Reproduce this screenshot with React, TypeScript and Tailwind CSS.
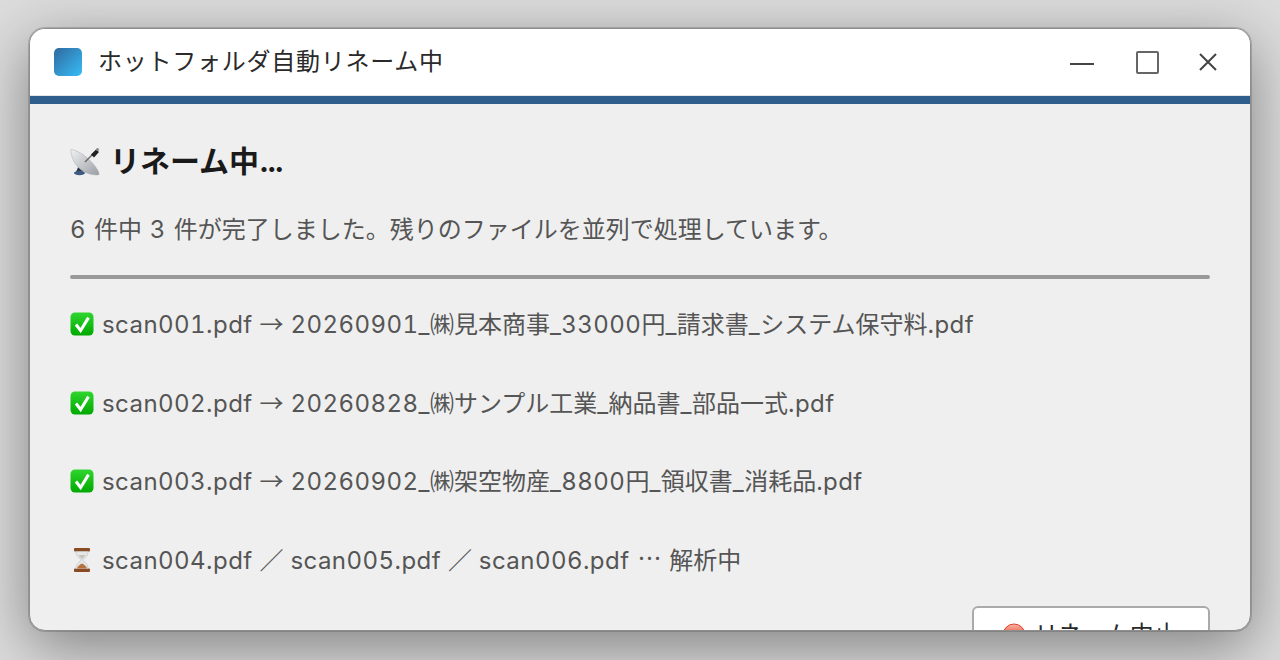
const font = "font-['Inter','Noto_Sans_CJK_JP',sans-serif]";

function CheckEmoji() {
  return (
    <svg width="24" height="24" viewBox="0 0 24 24" className="shrink-0">
      <defs>
        <linearGradient id="chk" x1="0" y1="0" x2="0" y2="1">
          <stop offset="0" stopColor="#2fd62f" />
          <stop offset="1" stopColor="#00a800" />
        </linearGradient>
      </defs>
      <rect x="0.5" y="0.5" width="23" height="23" rx="4.5" fill="url(#chk)" />
      <path d="M6 12.5l4.6 6L18.5 5.6" fill="none" stroke="#fff" strokeWidth="3" />
    </svg>
  );
}

function HourglassEmoji() {
  return (
    <svg width="24" height="26" viewBox="0 0 24 26" className="shrink-0">
      <rect x="4" y="1" width="16" height="3.5" rx="1" fill="#8a4b22" />
      <rect x="4" y="21.5" width="16" height="3.5" rx="1" fill="#8a4b22" />
      <path d="M6 4.5h12c0 5-4 6.500-5 8.500 1 2 5 3.500 5 8.500H6c0-5 4-6.500 5-8.500-1-2-5-3.500-5-8.500z" fill="#e4e6e8" stroke="#b9bdc0" strokeWidth="0.6" />
      <path d="M8.500 8h7c-.8 1.800-2.600 2.800-3.500 4.500C11.100 10.800 9.300 9.800 8.500 8z" fill="#c9c3ba" />
      <path d="M7 21.500c.6-2.600 3.200-4 5-5 1.800 1 4.400 2.400 5 5z" fill="#b5713f" />
    </svg>
  );
}

function DishEmoji() {
  return (
    <svg width="32" height="32" viewBox="0 0 32 32" className="shrink-0">
      <defs>
        <linearGradient id="dish" x1="0" y1="0" x2="1" y2="1">
          <stop offset="0" stopColor="#f0f1f3" />
          <stop offset="1" stopColor="#9a9ea3" />
        </linearGradient>
      </defs>
      <path d="M6 27l3.500-8 4.500 4.500-1.500 3.500z" fill="#2c3644" />
      <ellipse cx="9.500" cy="28" rx="5.500" ry="2.200" fill="#3d5a80" />
      <path d="M1 4.500c7 1 14 6 19 11s8 9 9 13c.2 1-.6 1.500-2 1.500-7 0-15-3-20-9S.5 7 1 4.500z" fill="url(#dish)" stroke="#a9adb1" strokeWidth="0.5" />
      <path d="M15 17l8-8" stroke="#666" strokeWidth="1.400" />
      <path d="M21 9.500l5-5 3 2.500-5 5.500z" fill="#222" />
      <circle cx="27.500" cy="4.500" r="1.500" fill="#888" />
    </svg>
  );
}

function StopEmoji() {
  return (
    <svg width="24" height="24" viewBox="0 0 24 24" className="shrink-0">
      <defs>
        <linearGradient id="stop" x1="0" y1="0" x2="0" y2="1">
          <stop offset="0" stopColor="#f8b8a8" />
          <stop offset="0.5" stopColor="#f0503c" />
          <stop offset="1" stopColor="#d01c10" />
        </linearGradient>
      </defs>
      <circle cx="12" cy="12" r="11" fill="url(#stop)" stroke="#e0402c" strokeWidth="1" />
    </svg>
  );
}

// latin runs are wider in the reference than Inter, CJK runs sit on the plain 24px grid
function Mixed({ text }: { text: string }) {
  return (
    <>
      {text.split(/([\x00-\x7f]+)/).map((part, i) =>
        /^[\x00-\x7f]+$/.test(part) ? (
          <span key={i} className="tracking-[0.45px] tabular-nums">{part}</span>
        ) : (
          <span key={i} className="font-['Noto_Sans_CJK_JP',sans-serif]">{part}</span>
        )
      )}
    </>
  );
}

const done = [
  "scan001.pdf → 20260901_㈱見本商事_33000円_請求書_システム保守料.pdf",
  "scan002.pdf → 20260828_㈱サンプル工業_納品書_部品一式.pdf",
  "scan003.pdf → 20260902_㈱架空物産_8800円_領収書_消耗品.pdf",
];

export default function App() {
  return (
    <div className={`${font} h-[660px] overflow-hidden bg-[#dcdcdc] pt-7 px-[29px]`}>
      <div className="h-[603px] overflow-hidden rounded-[16px] border border-[#8e8e8e] bg-[#efefef] shadow-[0_0_0_1px_rgba(0,0,0,0.16),0_16px_60px_rgba(0,0,0,0.42)]">
        <div className="h-[67px] flex items-center bg-white border-b border-[#e4e4e4] pl-[24px] pr-[33px]">
          <div className="w-7 h-7 rounded-[5px] bg-gradient-to-br from-[#2d6a9f] to-[#38bdf8]" />
          <div className="ml-4 text-[24px] tracking-[0.75px] text-[#2a2a2a]">ホットフォルダ自動リネーム中</div>
          <div className="ml-auto flex items-center">
            <svg width="26" height="26" viewBox="0 0 26 26" stroke="#444" strokeWidth="2" fill="none">
              <path d="M1 15h24" />
            </svg>
            <div className="ml-[41px] w-[23px] h-[23px] border-2 border-[#666] rounded-[2px]" />
            <svg className="ml-[40px]" width="18" height="18" viewBox="0 0 18 18" stroke="#444" strokeWidth="2" fill="none">
              <path d="M1 1l16 16M17 1L1 17" />
            </svg>
          </div>
        </div>
        <div className="h-2 bg-[#2f5d8c]" />
        <div className="px-10 pt-[39px]">
          <div className="flex items-center gap-2 h-9 text-[30px] font-bold text-[#1a1a1a]">
            <DishEmoji />
            <span>
              リネーム中<span className="tracking-[-2.5px]">...</span>
            </span>
          </div>
          <p className="mt-[32px] h-9 flex items-center text-[24px] text-[#555555] whitespace-pre [word-spacing:1px]">
            <span><Mixed text="6 件中 3 件が完了しました。残りのファイルを並列で処理しています。" /></span>
          </p>
          <div className="mt-[28px] h-1 rounded-full bg-[#999999]" />
          <div className="mt-[27px] flex flex-col gap-[42.67px] text-[24px] text-[#555555] whitespace-pre">
            {done.map((line) => (
              <div key={line} className="h-9 flex items-center gap-[8px]">
                <CheckEmoji />
                <span><Mixed text={line} /></span>
              </div>
            ))}
            <div className="h-9 flex items-center gap-[8px]">
              <HourglassEmoji />
              <span>
                <Mixed text="scan004.pdf ／ scan005.pdf ／ scan006.pdf " />
                <span className="mx-px inline-block -translate-y-[2px] font-['Noto_Sans_CJK_JP',sans-serif]">⋯</span>
                <Mixed text=" 解析中" />
              </span>
            </div>
          </div>
          <div className="mt-[28px] flex justify-end">
            <button className="h-[60px] w-[238px] rounded-[6px] border-2 border-[#aaaaaa] bg-white flex items-center justify-center gap-2 pr-0.5 pb-0.5 text-[24px] text-[#2a2a2a]">
              <StopEmoji />
              <span>リネーム中止</span>
            </button>
          </div>
        </div>
      </div>
    </div>
  );
}
